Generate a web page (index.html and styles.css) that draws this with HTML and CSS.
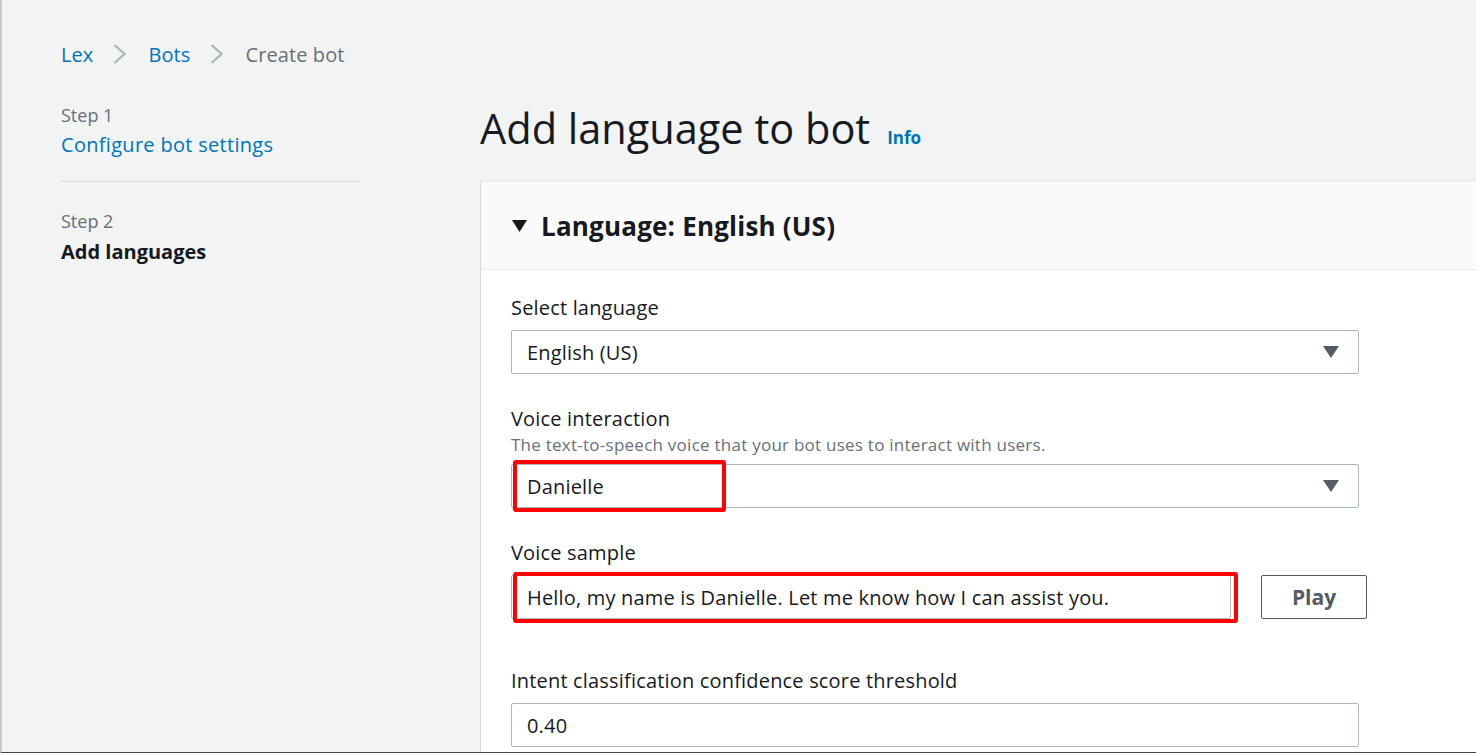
FILE: index.html
```html
<!DOCTYPE html>
<html lang="en">
<head>
<meta charset="utf-8">
<title>Add language to bot</title>
<link rel="stylesheet" href="styles.css">
</head>
<body>
<div class="page">
  <aside class="nav">
    <nav class="crumbs">
      <a class="crumb-link" href="#">Lex</a>
      <svg class="crumb-sep" width="13" height="20" viewBox="0 0 13 20"><path d="M1.5 1 L11.5 10 L1.5 19" fill="none" stroke="#aab7b8" stroke-width="2.2"/></svg>
      <a class="crumb-link" href="#">Bots</a>
      <svg class="crumb-sep" width="13" height="20" viewBox="0 0 13 20"><path d="M1.5 1 L11.5 10 L1.5 19" fill="none" stroke="#aab7b8" stroke-width="2.2"/></svg>
      <span class="crumb-current">Create bot</span>
    </nav>
    <ol class="steps">
      <li class="step">
        <span class="step-num">Step 1</span>
        <a class="step-link" href="#">Configure bot settings</a>
      </li>
      <li class="step step-current">
        <span class="step-num">Step 2</span>
        <span class="step-title">Add languages</span>
      </li>
    </ol>
  </aside>
  <main class="main">
    <header class="page-head">
      <h1 class="page-title">Add language to bot</h1>
      <a class="info" href="#">Info</a>
    </header>
    <section class="card">
      <div class="card-head">
        <svg class="expand-icon" width="15" height="12" viewBox="0 0 15 12"><path d="M0 0 H15 L7.5 12 Z" fill="#16191f"/></svg>
        <h2 class="card-title">Language: English (US)</h2>
      </div>
      <div class="card-body">
        <div class="field">
          <label class="field-label">Select language</label>
          <div class="select">
            <span class="select-value">English (US)</span>
            <svg class="caret" width="16" height="12" viewBox="0 0 16 12"><path d="M0 0 H16 L8 12 Z" fill="#545b64"/></svg>
          </div>
        </div>
        <div class="field">
          <label class="field-label">Voice interaction</label>
          <div class="field-desc">The text-to-speech voice that your bot uses to interact with users.</div>
          <div class="select annotated">
            <span class="select-value">Danielle</span>
            <svg class="caret" width="16" height="12" viewBox="0 0 16 12"><path d="M0 0 H16 L8 12 Z" fill="#545b64"/></svg>
            <span class="highlight highlight-voice"></span>
          </div>
        </div>
        <div class="field">
          <label class="field-label">Voice sample</label>
          <div class="input-row">
            <div class="input input-sample annotated">
              <span class="input-value">Hello, my name is Danielle. Let me know how I can assist you.</span>
              <span class="highlight highlight-sample"></span>
            </div>
            <button class="btn">Play</button>
          </div>
        </div>
        <div class="field field-threshold">
          <label class="field-label">Intent classification confidence score threshold</label>
          <div class="input input-full">
            <span class="input-value">0.40</span>
          </div>
        </div>
      </div>
    </section>
  </main>
</div>
</body>
</html>
```

FILE: styles.css
```css
* { box-sizing: border-box; }
html, body { margin: 0; padding: 0; }
body {
  background: #f2f3f3;
  font-family: "Open Sans", "Noto Sans", Arial, sans-serif;
  color: #16191f;
  overflow: hidden;
}
a { text-decoration: none; }

.page {
  display: flex;
  height: 753px;
  border-left: 2px solid #c4cacc;
  border-bottom: 1px solid #414750;
}

/* left navigation */
.nav {
  width: 478px;
  flex: none;
  padding: 42px 0 0 59px;
}
.crumbs {
  display: flex;
  align-items: center;
  height: 24px;
  font-size: 20px;
  letter-spacing: 0.1px;
}
.crumb-link { color: #0073bb; }
.crumb-sep { margin: 0 22px 0 20px; flex: none; }
.crumb-current { color: #687078; }

.steps {
  list-style: none;
  margin: 38px 0 0;
  padding: 0;
  width: 299px;
}
.step {
  display: flex;
  flex-direction: column;
}
.step + .step { margin-top: 28px; }
.step:first-child {
  padding-bottom: 23px;
  border-bottom: 1px solid #d5dbdb;
}
.step-num {
  font-size: 18px;
  line-height: 22px;
  color: #687078;
}
.step-link, .step-title {
  margin-top: 6px;
  font-size: 20px;
  line-height: 26px;
}
.step-link { color: #0073bb; letter-spacing: 0.3px; }
.step-title { margin-top: 7px; font-weight: 700; color: #16191f; }

/* main */
.main {
  flex: 1;
  display: flex;
  flex-direction: column;
  min-width: 0;
}
.page-head {
  display: flex;
  align-items: baseline;
  padding-top: 104px;
  height: 181px;
}
.page-title {
  margin: 0;
  font-size: 41.5px;
  line-height: 48px;
  font-weight: 400;
  color: #16191f;
}
.info {
  margin-left: 17px;
  font-size: 17px;
  font-weight: 700;
  color: #0073bb;
}

.card {
  flex: 1;
  background: #fff;
  border-top: 1px solid #e6eaea;
  border-left: 1px solid #d5dbdb;
}
.card-head {
  display: flex;
  align-items: center;
  height: 88px;
  padding-left: 31px;
  background: #fafafa;
  border-bottom: 1px solid #eaeded;
}
.expand-icon { margin-right: 14px; flex: none; }
.card-title {
  margin: 0;
  font-size: 26px;
  font-weight: 700;
  letter-spacing: 0.2px;
}
.card-body {
  padding: 26px 0 0 30px;
}

.field + .field { margin-top: 33px; }
.field-threshold { margin-top: 50px !important; }
.field-label {
  display: block;
  font-size: 20px;
  line-height: 24px;
  letter-spacing: 0.18px;
  margin-bottom: 10px;
}
.field-desc {
  font-size: 17px;
  line-height: 20px;
  letter-spacing: 0.25px;
  color: #687078;
  margin: -6px 0 9px;
}

.select, .input {
  position: relative;
  display: flex;
  align-items: center;
  height: 44px;
  padding: 0 15px;
  border: 1px solid #aab7b8;
  border-radius: 2px;
  background: #fff;
  font-size: 20px;
  letter-spacing: 0.18px;
}
.select { width: 848px; justify-content: space-between; }
.caret { margin-right: 4px; flex: none; }
.input-full { width: 848px; }

.input-row {
  display: flex;
  align-items: center;
  gap: 30px;
}
.input-sample { width: 720px; }
.btn {
  width: 106px;
  height: 44px;
  border: 1px solid #545b64;
  border-radius: 2px;
  background: #fff;
  color: #545b64;
  font-family: inherit;
  font-size: 21px;
  font-weight: 700;
}

.highlight {
  position: absolute;
  border: 4px solid #ff0000;
  border-radius: 3px;
  pointer-events: none;
}
.highlight-voice {
  left: 1px;
  top: -5px;
  width: 213px;
  height: 52px;
}
.highlight-sample {
  left: 1px;
  top: -4px;
  width: 725px;
  height: 51px;
}
```
